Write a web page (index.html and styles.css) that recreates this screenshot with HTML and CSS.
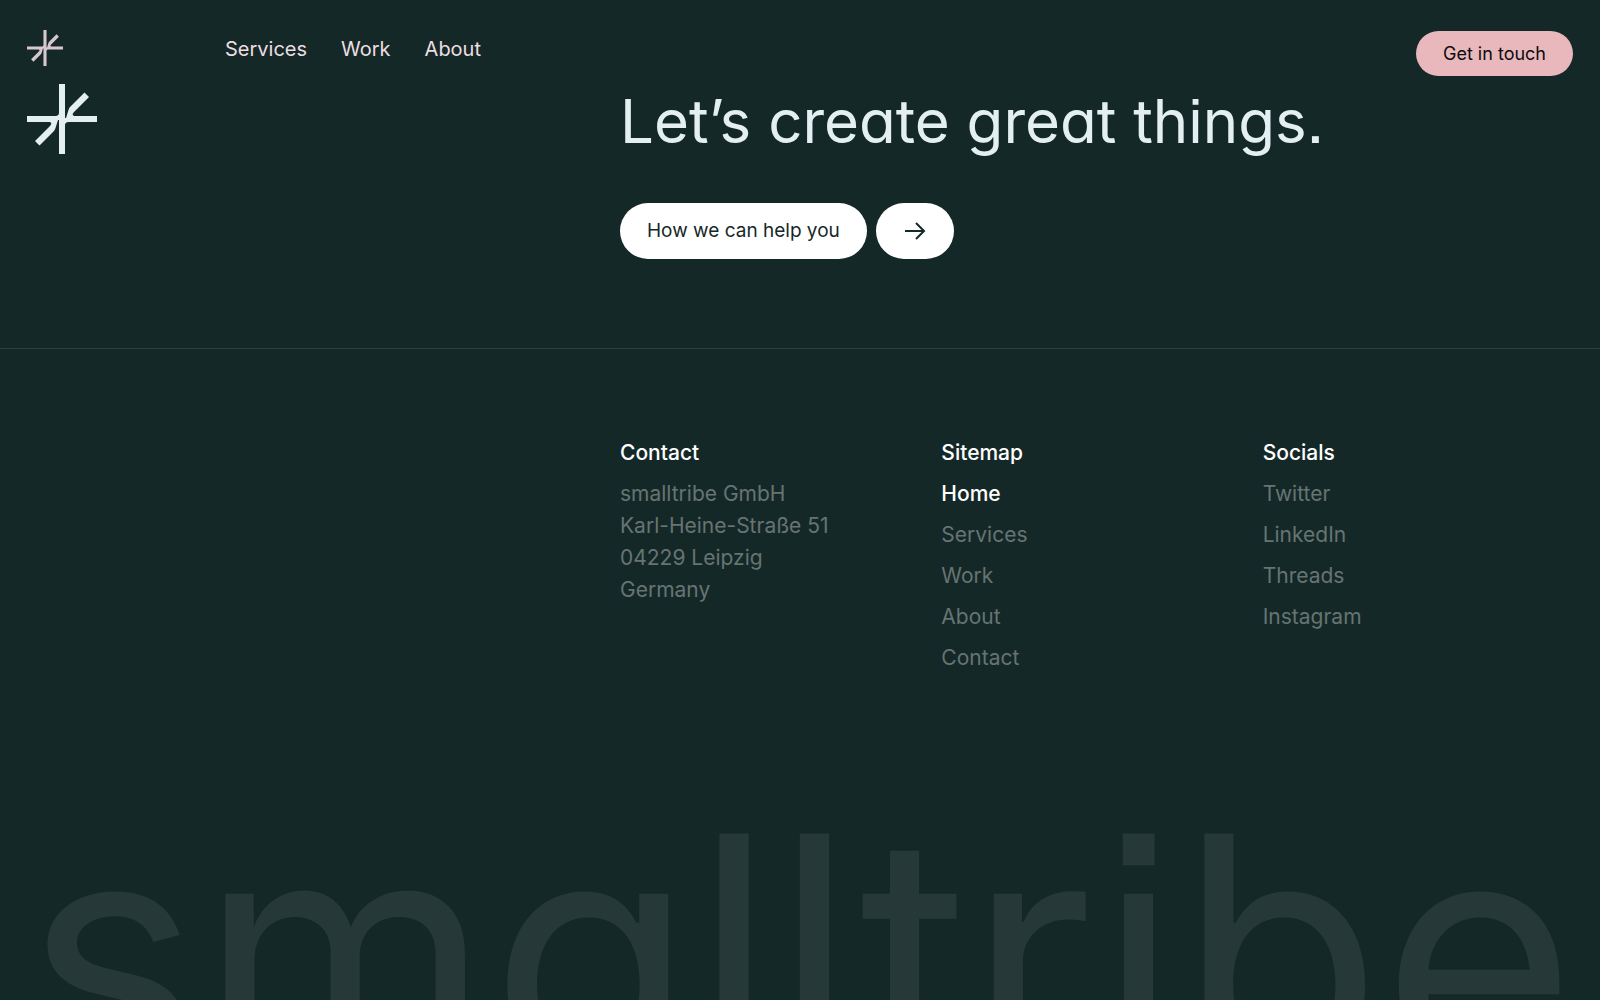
FILE: index.html
```html
<!DOCTYPE html>
<html lang="en">
<head>
<meta charset="utf-8">
<meta name="viewport" content="width=device-width, initial-scale=1">
<title>smalltribe</title>
<link rel="stylesheet" href="styles.css">
</head>
<body>
<svg class="sprite" aria-hidden="true">
  <symbol id="star" viewBox="0 0 70 70">
    <path d="M32 0h6v34h1l2.500-8c.5-1.500 1-2.500 2-3.500L57.500 8.500l4.500 4.500L47.500 27.500c-3 3-2 4.500 1 4.500H70v6H41.500c-2 0-3.500 1-3.500 3v29h-6V36h-1l-2.500 8c-.5 1.500-1 2.500-2 3.500L12.500 61.500 8 57 22.500 42.500c3-3 2-4.500-1-4.500H0v-6h28.500c2 0 3.500-1 3.500-3z"/>
  </symbol>
</svg>
<div class="page">
  <header class="topbar">
    <a class="brand" href="#" aria-label="smalltribe home"><svg class="brand-mark"><use href="#star"/></svg></a>
    <nav class="nav" aria-label="Main">
      <a href="#">Services</a>
      <a href="#">Work</a>
      <a href="#">About</a>
    </nav>
    <button class="touch" type="button">Get in touch</button>
  </header>

  <section class="cta">
    <svg class="cta-mark" aria-hidden="true"><use href="#star"/></svg>
    <div class="cta-body">
      <h2 class="cta-title">Let’s create great things.</h2>
      <div class="cta-actions">
        <a class="pill" href="#">How we can help you</a>
        <a class="pill" href="#" aria-label="Continue">
          <svg class="arrow" viewBox="0 0 24 22" aria-hidden="true"><path d="M2 11h19M13 3l8 8-8 8"/></svg>
        </a>
      </div>
    </div>
  </section>

  <footer class="footer">
    <div class="columns">
      <section class="column">
        <h3>Contact</h3>
        <address>smalltribe GmbH<br>Karl-Heine-Straße 51<br>04229 Leipzig<br>Germany</address>
      </section>
      <nav class="column" aria-label="Sitemap">
        <h3>Sitemap</h3>
        <ul>
          <li><a class="current" href="#">Home</a></li>
          <li><a href="#">Services</a></li>
          <li><a href="#">Work</a></li>
          <li><a href="#">About</a></li>
          <li><a href="#">Contact</a></li>
        </ul>
      </nav>
      <nav class="column" aria-label="Socials">
        <h3>Socials</h3>
        <ul>
          <li><a href="#">Twitter</a></li>
          <li><a href="#">LinkedIn</a></li>
          <li><a href="#">Threads</a></li>
          <li><a href="#">Instagram</a></li>
        </ul>
      </nav>
    </div>
    <div class="wordmark">smalltribe</div>
  </footer>
</div>
</body>
</html>
```
FILE: styles.css
```css
* { box-sizing: border-box; margin: 0; padding: 0; }

body {
  background: #152828;
  color: #fff;
  font: 400 20px/32px Inter, "Liberation Sans", sans-serif;
}

a { color: inherit; text-decoration: none; }
ul { list-style: none; }
address { font-style: normal; }
.sprite { display: none; }

.page {
  min-height: 100vh;
  display: flex;
  flex-direction: column;
}

.topbar {
  display: flex;
  align-items: flex-start;
  padding: 30px 27px 0;
  height: 84px;
  color: #ecdfe2;
}
.brand { width: 198px; height: 36px; }
.brand-mark { display: block; width: 36px; height: 36px; fill: #d8c8ce; }
.nav { display: flex; gap: 34px; line-height: 38px; }
.touch {
  margin-left: auto;
  margin-top: 1px;
  height: 45px;
  padding: 0 27px;
  border: 0;
  border-radius: 23px;
  background: #e8b8bc;
  color: #0c0c0c;
  font: 400 18px/45px Inter, "Liberation Sans", sans-serif;
}

.cta {
  display: grid;
  grid-template-columns: 37vw 1fr;
  padding: 0 27px 89px 28px;
  border-bottom: 1px solid #2b3d3d;
}
.cta-mark { width: 70px; height: 70px; margin-left: -1px; fill: #e4eff2; }
.cta-title {
  color: #e4eff2;
  font-size: 60px;
  line-height: 74px;
  font-weight: 400;
  font-feature-settings: "cv11", "ss07";
}
.cta-actions { display: flex; gap: 9px; margin-top: 45px; }
.pill {
  display: flex;
  align-items: center;
  height: 56px;
  padding: 0 27px;
  border-radius: 28px;
  background: #fff;
  color: #152828;
  font-size: 19px;
}
.arrow {
  width: 24px;
  height: 22px;
  fill: none;
  stroke: #152828;
  stroke-width: 2;
}

.footer {
  flex: 1;
  display: flex;
  flex-direction: column;
  padding: 83px 27px 0 28px;
}
.columns {
  display: grid;
  grid-template-columns: repeat(3, 1fr);
  gap: 11px;
  padding-left: 37vw;
  color: #667472;
  font-size: 21px;
}
.column h3 {
  margin: 5px 0 9px;
  color: #fff;
  font-size: 21px;
  font-weight: 500;
}
.column ul { display: grid; gap: 9px; }
.column .current { color: #fff; font-weight: 500; }

.wordmark {
  flex: 1 1 0;
  min-height: 160px;
  margin: 112px -27px 0 -28px;
  overflow: hidden;
  color: #263837;
  font-size: 332px;
  line-height: 336px;
  text-align: center;
  white-space: nowrap;
  font-feature-settings: "cv11", "ss07";
}
```
